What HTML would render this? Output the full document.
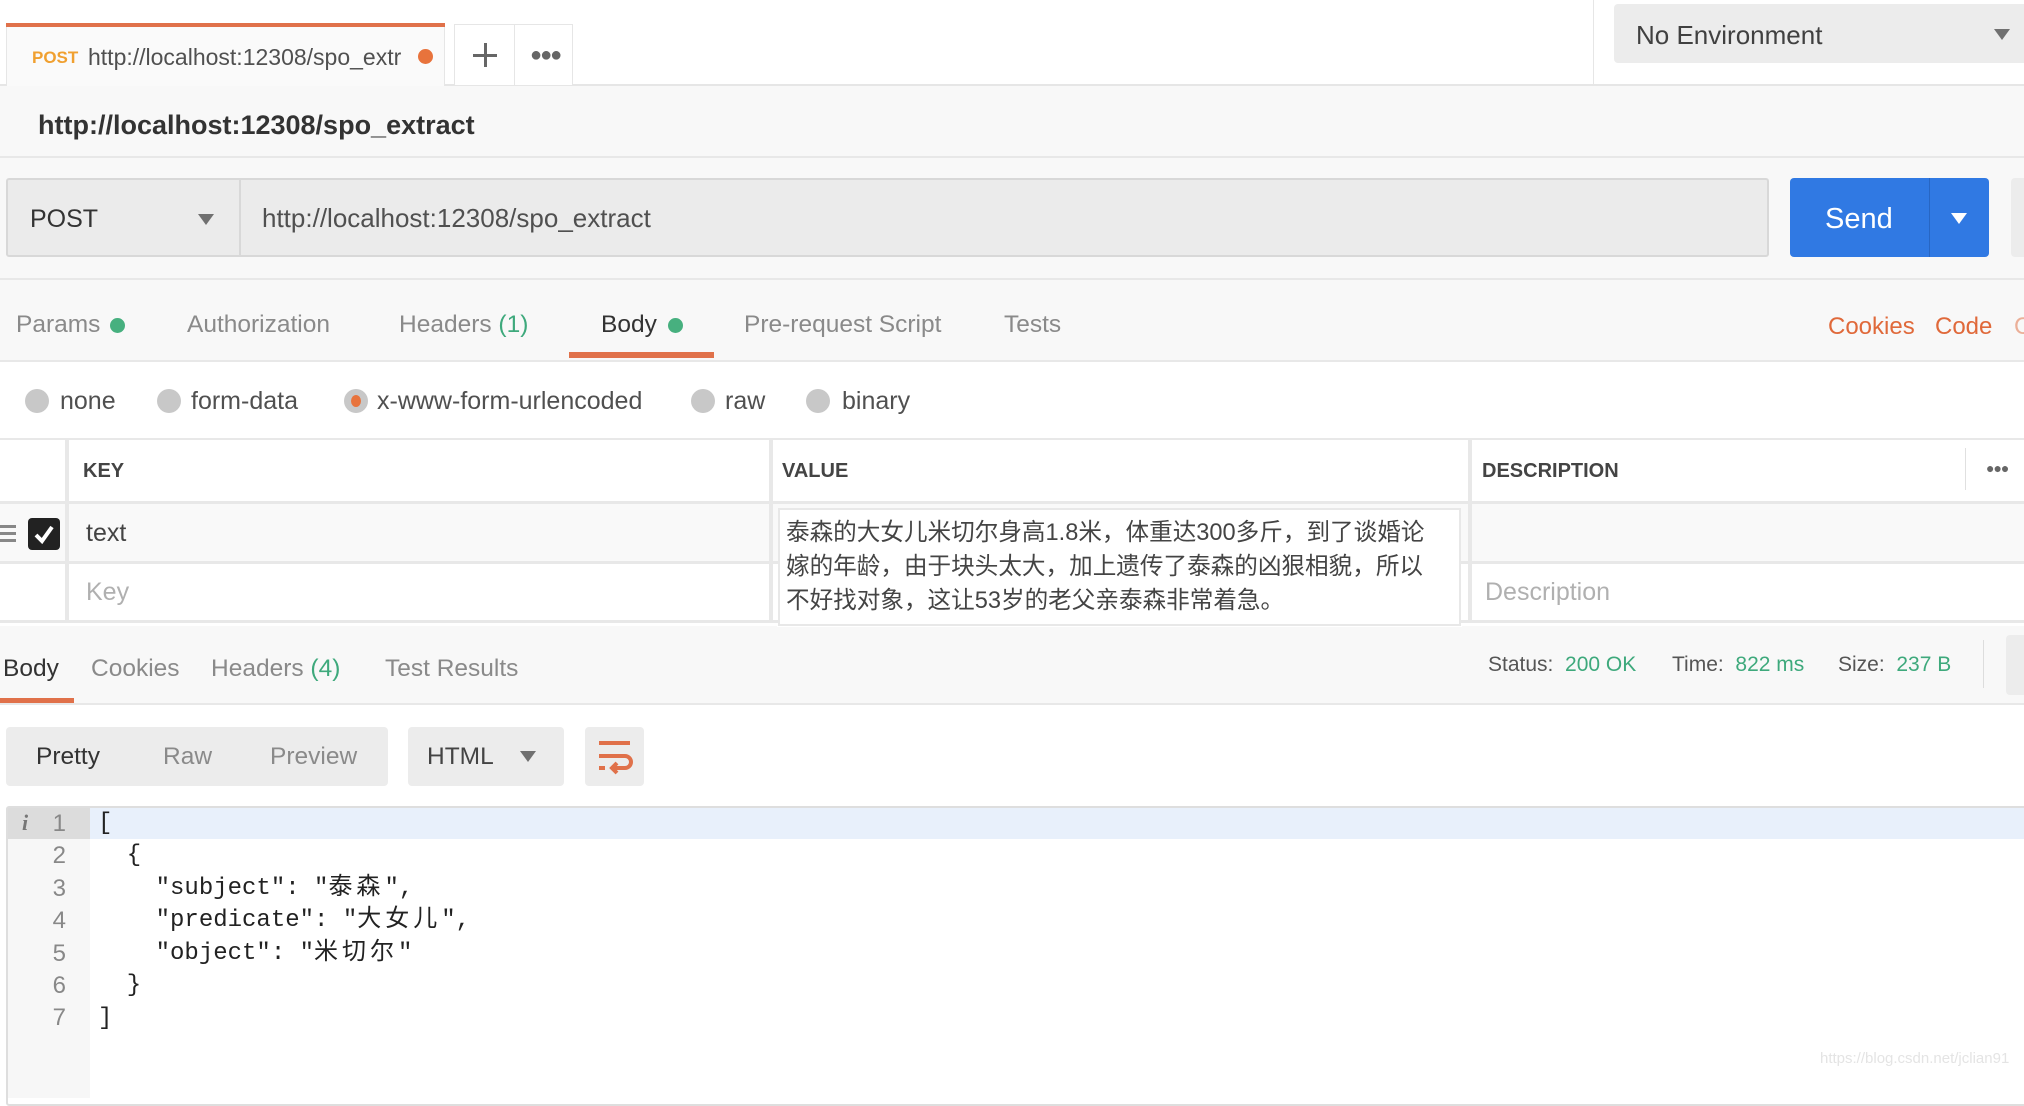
<!DOCTYPE html>
<html><head><meta charset="utf-8">
<style>
*{box-sizing:border-box;margin:0;padding:0}
body{width:2024px;height:1076px;overflow:hidden;background:#fff;font-family:"Liberation Sans","Noto Sans CJK SC",sans-serif;color:#505050;position:relative}
.a{position:absolute;white-space:nowrap}
.g{color:#8a8a8a}
.or{color:#e0693a}
.gr{color:#3ea97c}
.dot{position:absolute;width:15px;height:15px;border-radius:50%;background:#47b07f}
.rad{position:absolute;width:24px;height:24px;border-radius:50%;background:#c8c8c8}
.mono{font-family:"Liberation Mono","Noto Sans CJK SC",monospace;font-size:24px;color:#222}
.cj{letter-spacing:4px}
.ln{position:absolute;left:98px;height:32px;line-height:32px;white-space:pre}
</style></head><body>
<div class="a" style="left:0;top:84px;width:2024px;height:2px;background:#e6e6e6"></div>
<div class="a" style="left:6px;top:24px;width:439px;height:62px;background:#fafafa;border:1px solid #e6e6e6;border-bottom:none"></div>
<div class="a" style="left:6px;top:23px;width:439px;height:4px;background:#e0714a"></div>
<div class="a" style="left:32px;top:48px;font-size:17px;font-weight:bold;color:#f0a030">POST</div>
<div class="a" style="left:88px;top:44px;font-size:23px;color:#505050">http://localhost:12308/spo_extr</div>
<div class="a" style="left:418px;top:49px;width:15px;height:15px;border-radius:50%;background:#e8733c"></div>
<div class="a" style="left:454px;top:24px;width:119px;height:61px;border:1px solid #e6e6e6;border-bottom:none;background:#fff"></div>
<div class="a" style="left:514px;top:24px;width:1px;height:61px;background:#e6e6e6"></div>
<div class="a" style="left:473px;top:54px;width:24px;height:3px;background:#666"></div>
<div class="a" style="left:484px;top:43px;width:3px;height:24px;background:#666"></div>
<div class="a" style="left:530px;top:51px;font-size:20px;letter-spacing:-2px;color:#666;font-weight:bold;line-height:8px">●●●</div>
<div class="a" style="left:1593px;top:0;width:1px;height:85px;background:#e6e6e6"></div>
<div class="a" style="left:1614px;top:4px;width:420px;height:59px;background:#ececec;border-radius:4px"></div>
<div class="a" style="left:1636px;top:20px;font-size:26px;color:#404040">No Environment</div>
<div class="a" style="left:1994px;top:29px;width:0;height:0;border-left:8px solid transparent;border-right:8px solid transparent;border-top:11px solid #707070"></div>
<div class="a" style="left:0;top:86px;width:2024px;height:275px;background:#f8f8f8"></div>
<div class="a" style="left:38px;top:110px;font-size:27px;font-weight:bold;color:#333">http://localhost:12308/spo_extract</div>
<div class="a" style="left:0;top:156px;width:2024px;height:2px;background:#e8e8e8"></div>
<div class="a" style="left:6px;top:178px;width:1763px;height:79px;background:#ebebeb;border:2px solid #d8d8d8;border-radius:3px"></div>
<div class="a" style="left:239px;top:180px;width:2px;height:75px;background:#d8d8d8"></div>
<div class="a" style="left:30px;top:205px;font-size:25px;color:#333">POST</div>
<div class="a" style="left:198px;top:214px;width:0;height:0;border-left:8px solid transparent;border-right:8px solid transparent;border-top:11px solid #707070"></div>
<div class="a" style="left:262px;top:203px;font-size:26px;color:#505050">http://localhost:12308/spo_extract</div>
<div class="a" style="left:1790px;top:178px;width:199px;height:79px;background:#3079e3;border-radius:4px"></div>
<div class="a" style="left:1929px;top:178px;width:1px;height:79px;background:#2766c4"></div>
<div class="a" style="left:1825px;top:203px;font-size:29px;color:#fff">Send</div>
<div class="a" style="left:1951px;top:213px;width:0;height:0;border-left:8px solid transparent;border-right:8px solid transparent;border-top:11px solid #fff"></div>
<div class="a" style="left:2011px;top:178px;width:20px;height:79px;background:#ececec;border-radius:4px"></div>
<div class="a" style="left:0;top:278px;width:2024px;height:2px;background:#e8e8e8"></div>
<div class="a g" style="left:16px;top:311px;font-size:24.5px">Params</div><div class="dot" style="left:110px;top:318px"></div>
<div class="a g" style="left:187px;top:311px;font-size:24.5px">Authorization</div>
<div class="a g" style="left:399px;top:311px;font-size:24.5px">Headers <span class="gr">(1)</span></div>
<div class="a" style="left:601px;top:311px;font-size:24.5px;color:#333">Body</div><div class="dot" style="left:668px;top:318px"></div>
<div class="a" style="left:569px;top:352px;width:145px;height:6px;background:#e0714a"></div>
<div class="a g" style="left:744px;top:311px;font-size:24.5px">Pre-request Script</div>
<div class="a g" style="left:1004px;top:311px;font-size:24.5px">Tests</div>
<div class="a or" style="left:1828px;top:313px;font-size:24px">Cookies</div>
<div class="a or" style="left:1935px;top:313px;font-size:24px">Code</div>
<div class="a or" style="left:2014px;top:313px;font-size:24px;opacity:.5">C</div>
<div class="a" style="left:0;top:360px;width:2024px;height:2px;background:#e8e8e8"></div>
<div class="rad" style="left:25px;top:389px"></div><div class="a" style="left:60px;top:387px;font-size:25px">none</div>
<div class="rad" style="left:157px;top:389px"></div><div class="a" style="left:191px;top:387px;font-size:25px">form-data</div>
<div class="rad" style="left:344px;top:389px"></div><div class="a" style="left:351px;top:395px;width:10px;height:12px;border-radius:50%;background:#e8733c"></div><div class="a" style="left:377px;top:387px;font-size:25px">x-www-form-urlencoded</div>
<div class="rad" style="left:691px;top:389px"></div><div class="a" style="left:725px;top:387px;font-size:25px">raw</div>
<div class="rad" style="left:806px;top:389px"></div><div class="a" style="left:842px;top:387px;font-size:25px">binary</div>
<div class="a" style="left:0;top:438px;width:2024px;height:2px;background:#e8e8e8"></div>
<div class="a" style="left:0;top:501px;width:2024px;height:3px;background:#e8e8e8"></div>
<div class="a" style="left:0;top:504px;width:2024px;height:58px;background:#f9f9f9"></div>
<div class="a" style="left:0;top:561px;width:2024px;height:3px;background:#e8e8e8"></div>
<div class="a" style="left:0;top:620px;width:2024px;height:3px;background:#e8e8e8"></div>
<div class="a" style="left:65px;top:439px;width:4px;height:184px;background:#e8e8e8"></div>
<div class="a" style="left:769px;top:439px;width:4px;height:184px;background:#e8e8e8"></div>
<div class="a" style="left:1468px;top:439px;width:4px;height:184px;background:#e8e8e8"></div>
<div class="a" style="left:1965px;top:448px;width:1px;height:42px;background:#e0e0e0"></div>
<div class="a" style="left:83px;top:460px;font-size:20px;font-weight:bold;color:#444">KEY</div>
<div class="a" style="left:782px;top:460px;font-size:20px;font-weight:bold;color:#444">VALUE</div>
<div class="a" style="left:1482px;top:460px;font-size:20px;font-weight:bold;color:#444">DESCRIPTION</div>
<div class="a" style="left:1986px;top:464px;font-size:14px;color:#666;letter-spacing:-1px;line-height:8px">●●●</div>
<div class="a" style="left:0;top:525px;width:16px;height:3px;background:#888;box-shadow:0 7px 0 #888,0 14px 0 #888"></div>
<div class="a" style="left:28px;top:518px;width:32px;height:32px;background:#222;border-radius:4px"></div>
<svg class="a" style="left:28px;top:518px" width="32" height="32"><path d="M8 17 L14 23 L24 9" stroke="#fff" stroke-width="4" fill="none"/></svg>
<div class="a" style="left:86px;top:519px;font-size:25px;color:#444">text</div>
<div class="a" style="left:86px;top:578px;font-size:25px;color:#b0b0b0">Key</div>
<div class="a" style="left:1485px;top:578px;font-size:25px;color:#b0b0b0">Description</div>
<div class="a" style="left:778px;top:508px;width:683px;height:118px;background:#fff;border:2px solid #e8e8e8"></div>
<div class="a" style="left:786px;top:516px;font-size:23.6px;line-height:34px;color:#444;white-space:normal;width:672px">泰森的大女儿米切尔身高1.8米，体重达300多斤，到了谈婚论<br>嫁的年龄，由于块头太大，加上遗传了泰森的凶狠相貌，所以<br>不好找对象，这让53岁的老父亲泰森非常着急。</div>
<div class="a" style="left:0;top:626px;width:777px;height:78px;background:#f8f8f8"></div>
<div class="a" style="left:1462px;top:626px;width:562px;height:78px;background:#f8f8f8"></div>
<div class="a" style="left:777px;top:627px;width:685px;height:77px;background:#f8f8f8"></div>
<div class="a" style="left:3px;top:655px;font-size:24.5px;color:#333">Body</div>
<div class="a" style="left:0;top:698px;width:74px;height:6px;background:#e0714a"></div>
<div class="a g" style="left:91px;top:655px;font-size:24.5px">Cookies</div>
<div class="a g" style="left:211px;top:655px;font-size:24.5px">Headers <span class="gr">(4)</span></div>
<div class="a g" style="left:385px;top:655px;font-size:24.5px">Test Results</div>
<div class="a" style="left:1488px;top:653px;font-size:21px;color:#555">Status: <span class="gr">&nbsp;200 OK</span></div>
<div class="a" style="left:1672px;top:653px;font-size:21px;color:#555">Time: <span class="gr">&nbsp;822 ms</span></div>
<div class="a" style="left:1838px;top:653px;font-size:21px;color:#555">Size: <span class="gr">&nbsp;237 B</span></div>
<div class="a" style="left:1983px;top:640px;width:1px;height:48px;background:#ddd"></div>
<div class="a" style="left:2006px;top:635px;width:30px;height:60px;background:#ececec;border-radius:4px"></div>
<div class="a" style="left:0;top:703px;width:2024px;height:2px;background:#e8e8e8"></div>
<div class="a" style="left:6px;top:727px;width:382px;height:59px;background:#ececec;border-radius:4px"></div>
<div class="a" style="left:36px;top:743px;font-size:24.5px;color:#333">Pretty</div>
<div class="a g" style="left:163px;top:743px;font-size:24.5px">Raw</div>
<div class="a g" style="left:270px;top:743px;font-size:24.5px">Preview</div>
<div class="a" style="left:408px;top:727px;width:156px;height:59px;background:#ececec;border-radius:4px"></div>
<div class="a" style="left:427px;top:743px;font-size:24.5px;color:#444">HTML</div>
<div class="a" style="left:520px;top:751px;width:0;height:0;border-left:8px solid transparent;border-right:8px solid transparent;border-top:11px solid #707070"></div>
<div class="a" style="left:585px;top:727px;width:59px;height:59px;background:#ececec;border-radius:4px"></div>
<svg class="a" style="left:585px;top:727px" width="59" height="59"><g stroke="#e0714a" stroke-width="4" fill="none"><path d="M14 16 H45"/><path d="M14 29 H40 a6 6 0 0 1 0 12 H28"/><path d="M32 36 L27 41 L32 46"/><path d="M14 41 H20"/></g></svg>
<div class="a" style="left:6px;top:806px;width:2030px;height:300px;border:2px solid #dedede;border-radius:3px;background:#fff"></div>
<div class="a" style="left:8px;top:808px;width:82px;height:290px;background:#f7f7f7"></div>
<div class="a" style="left:8px;top:808px;width:82px;height:31px;background:#dcdcdc"></div>
<div class="a" style="left:90px;top:808px;width:1940px;height:31px;background:#e8f0fb"></div>
<div class="a" style="left:22px;top:810px;font-size:22px;font-style:italic;font-weight:bold;color:#777;font-family:'Liberation Serif',serif">i</div>
<div class="a" style="left:46px;top:808px;font-size:24px;color:#888;line-height:32.4px;text-align:right;width:20px">1<br>2<br>3<br>4<br>5<br>6<br>7</div>
<div class="ln mono" style="top:808px">[</div>
<div class="ln mono" style="top:840px">  {</div>
<div class="ln mono" style="top:873px">    "subject": "<span class="cj">泰森</span>",</div>
<div class="ln mono" style="top:905px">    "predicate": "<span class="cj">大女儿</span>",</div>
<div class="ln mono" style="top:938px">    "object": "<span class="cj">米切尔</span>"</div>
<div class="ln mono" style="top:970px">  }</div>
<div class="ln mono" style="top:1003px">]</div>
<div class="a" style="left:1820px;top:1050px;font-size:15px;color:#e4e4e4">https://blog.csdn.net/jclian91</div>
</body></html>
